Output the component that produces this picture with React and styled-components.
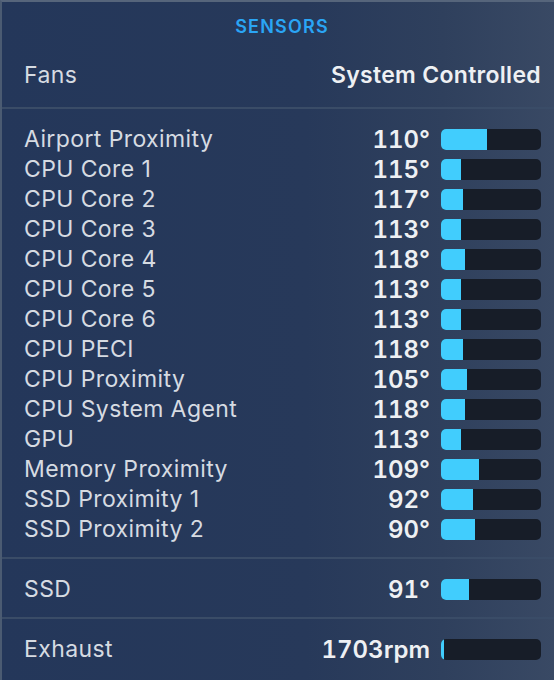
import React from 'react';
import styled, { createGlobalStyle } from 'styled-components';

const GlobalStyle = createGlobalStyle`
  html, body {
    margin: 0;
    padding: 0;
    background: #26395a;
  }
  body {
    font-family: Inter, "Noto Sans", "Liberation Sans", sans-serif;
    -webkit-font-smoothing: antialiased;
  }
`;

const Panel = styled.div`
  width: 554px;
  height: 680px;
  box-sizing: border-box;
  border-top: 2px solid #56657b;
  border-left: 2px solid #4b5b72;
  background: linear-gradient(to right, #24375a 0%, #27395a 55%, #2f405d 80%, #394964 100%);
  display: flex;
  flex-direction: column;
  overflow: hidden;
`;

const Title = styled.div`
  height: 50px;
  line-height: 50px;
  padding-left: 8px;
  text-align: center;
  color: #2aa5f5;
  font-size: 18px;
  font-weight: 600;
  letter-spacing: 1.2px;
`;

const Section = styled.div`
  display: flex;
  flex-direction: column;
  padding: ${(p) => p.$pad || '15px 13px 13px 22px'};
`;

const Divider = styled.div`
  height: 2px;
  background: #3a4c67;
  flex-shrink: 0;
`;

const FansRow = styled.div`
  display: flex;
  justify-content: space-between;
  align-items: center;
  height: 30px;
`;

const Label = styled.span`
  color: #d6dbe2;
  font-weight: 400;
  font-size: 23px;
  letter-spacing: 0.4px;
  white-space: nowrap;
`;

const Strong = styled.span`
  color: #eef0f3;
  font-weight: 600;
  font-size: 23px;
  letter-spacing: 0.3px;
  white-space: nowrap;
`;

const Row = styled.div`
  display: grid;
  grid-template-columns: 1fr auto 100px;
  column-gap: 11px;
  align-items: center;
  height: 30px;
`;

const Value = styled(Strong)`
  text-align: right;
  font-size: 24px;
  letter-spacing: 0;
  font-variant-numeric: tabular-nums;
`;

const Bar = styled.div`
  width: 100px;
  height: 21px;
  border-radius: 5px;
  background: #171d28;
  overflow: hidden;
  display: flex;
`;

const Fill = styled.div`
  height: 100%;
  background: #41cdfd;
`;

const sensors = [
  ['Airport Proximity', '110°', 46],
  ['CPU Core 1', '115°', 20],
  ['CPU Core 2', '117°', 22],
  ['CPU Core 3', '113°', 20],
  ['CPU Core 4', '118°', 24],
  ['CPU Core 5', '113°', 20],
  ['CPU Core 6', '113°', 20],
  ['CPU PECI', '118°', 22],
  ['CPU Proximity', '105°', 26],
  ['CPU System Agent', '118°', 24],
  ['GPU', '113°', 20],
  ['Memory Proximity', '109°', 38],
  ['SSD Proximity 1', '92°', 32],
  ['SSD Proximity 2', '90°', 34],
];

function SensorRow({ name, value, level }) {
  return (
    <Row>
      <Label>{name}</Label>
      <Value>{value}</Value>
      <Bar>
        <Fill style={{ width: `${level}%` }} />
      </Bar>
    </Row>
  );
}

export default function App() {
  return (
    <>
      <GlobalStyle />
      <Panel>
        <Title>SENSORS</Title>
        <Section $pad="8px 13px 17px 22px">
          <FansRow>
            <Label>Fans</Label>
            <Strong>System Controlled</Strong>
          </FansRow>
        </Section>
        <Divider />
        <Section>
          {sensors.map(([name, value, level]) => (
            <SensorRow key={name} name={name} value={value} level={level} />
          ))}
        </Section>
        <Divider />
        <Section>
          <SensorRow name="SSD" value="91°" level={28} />
        </Section>
        <Divider />
        <Section>
          <SensorRow name="Exhaust" value="1703rpm" level={3} />
        </Section>
      </Panel>
    </>
  );
}
